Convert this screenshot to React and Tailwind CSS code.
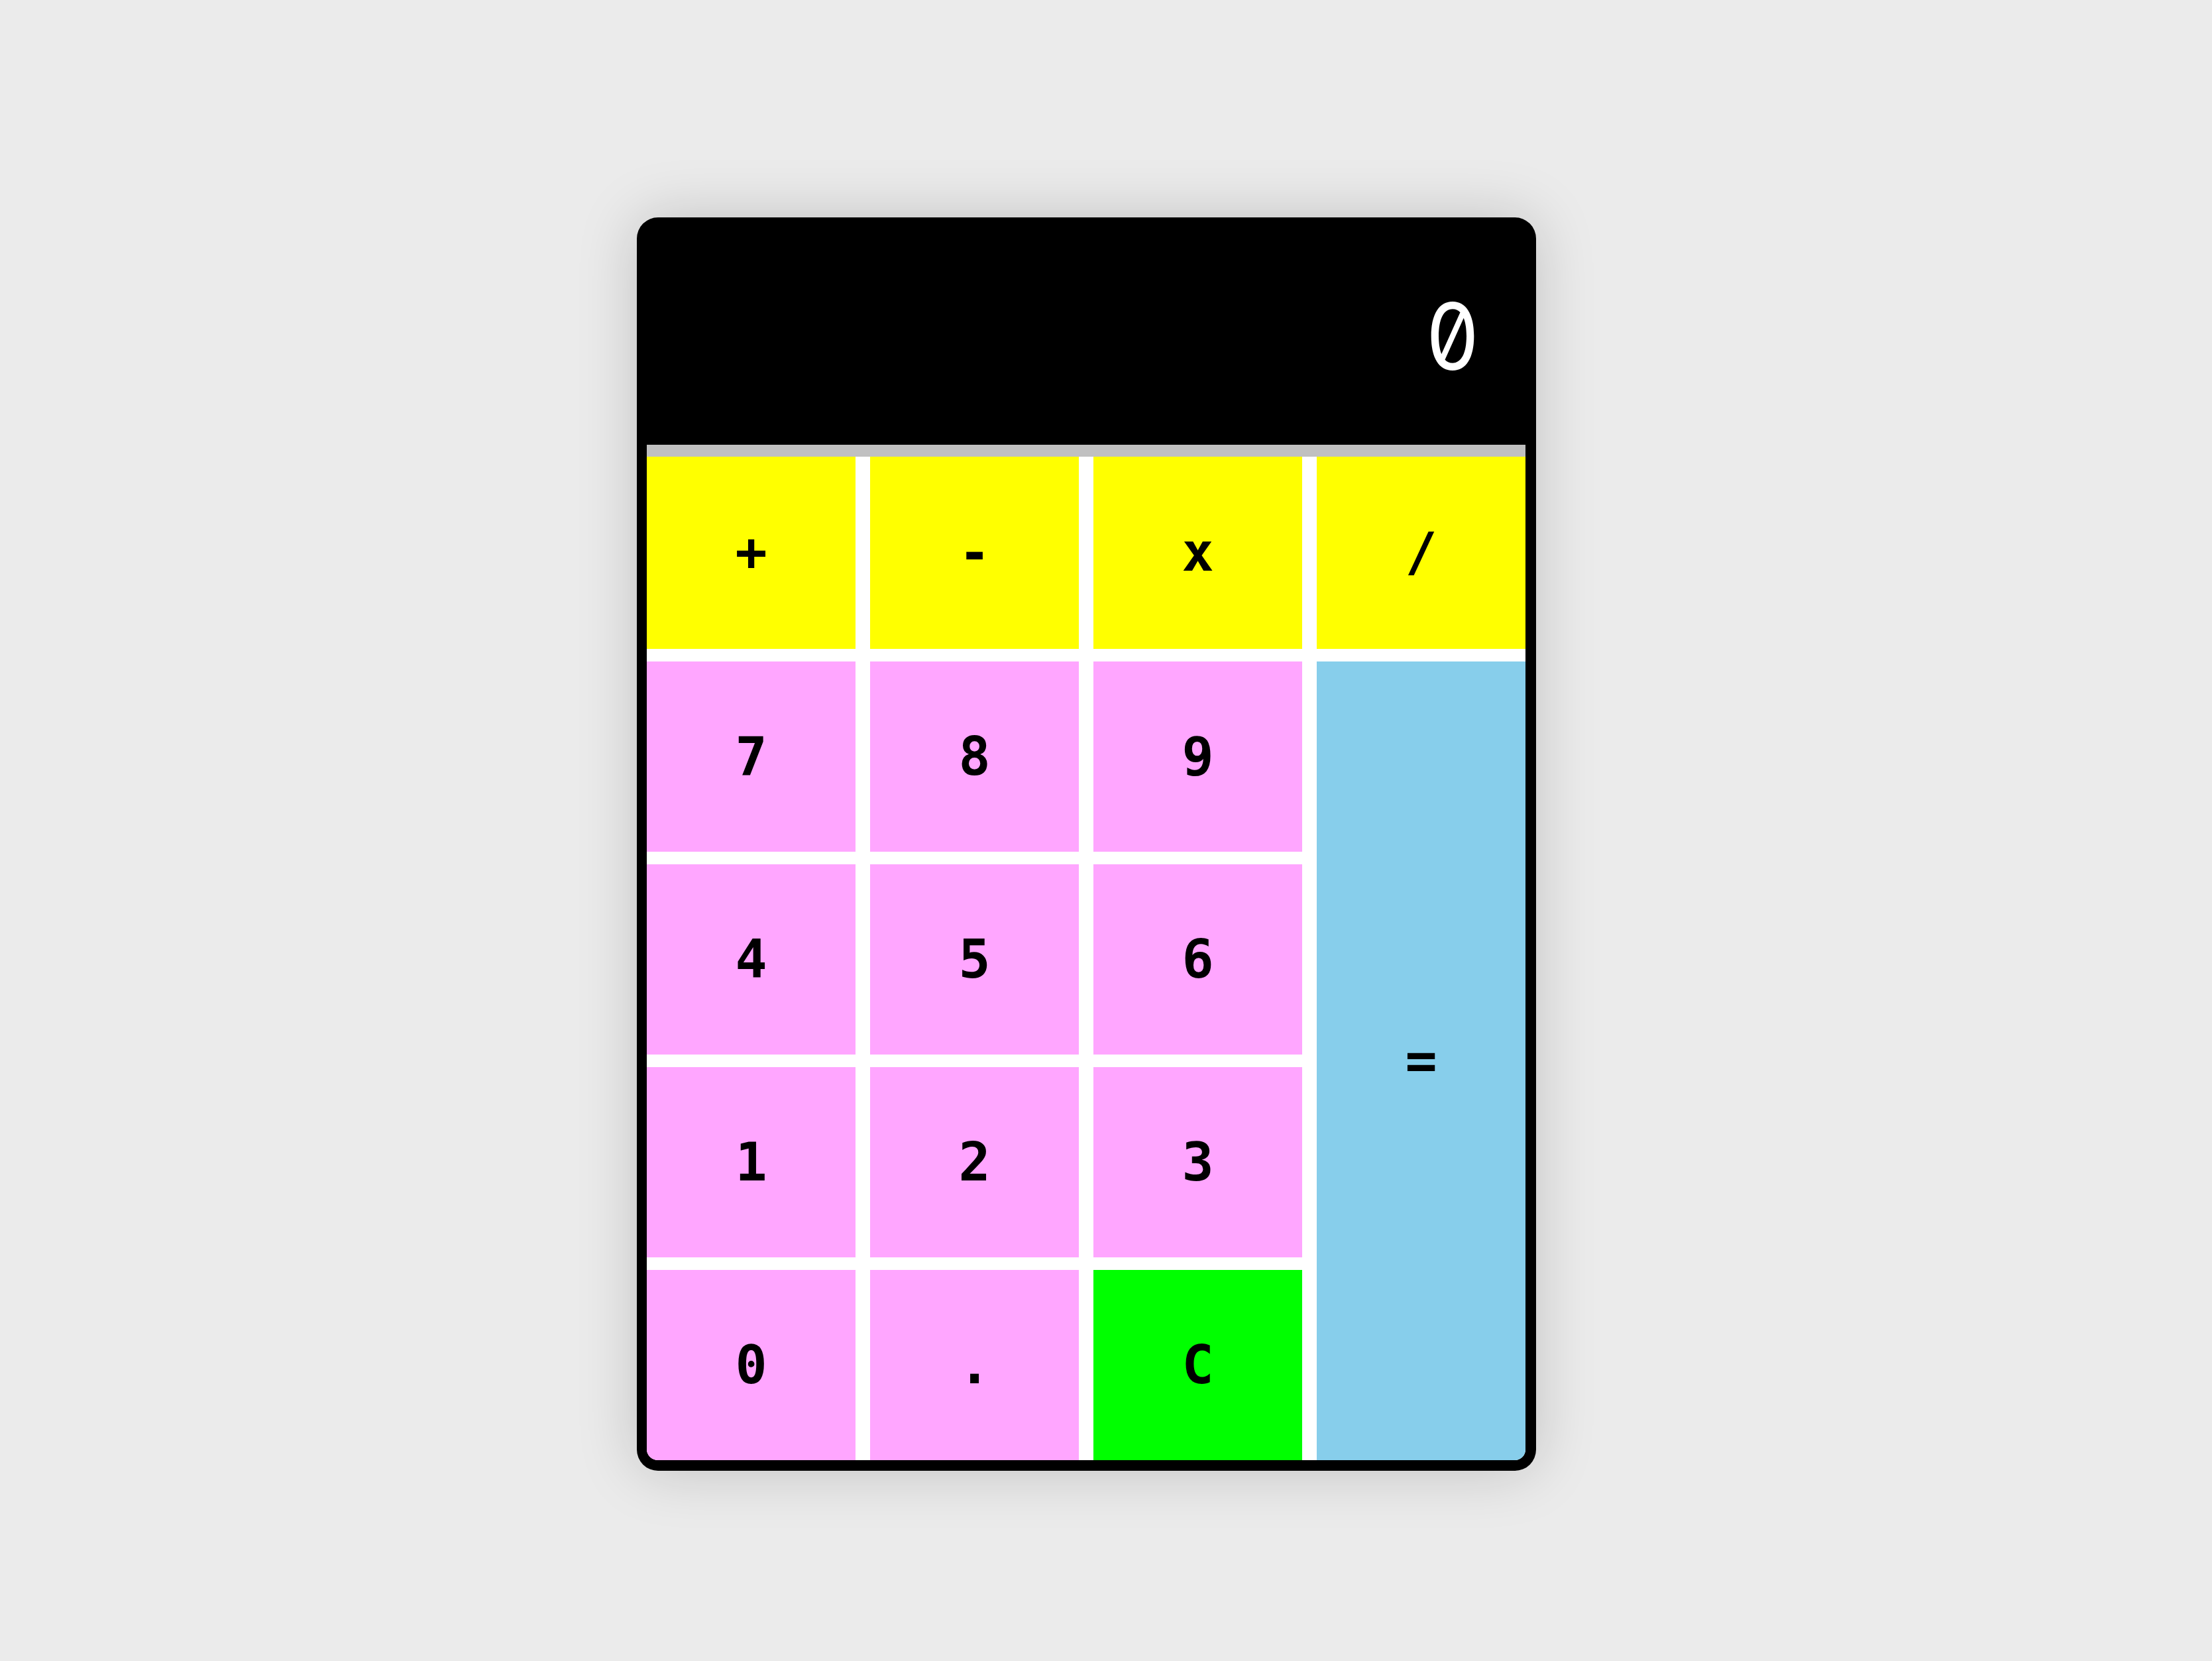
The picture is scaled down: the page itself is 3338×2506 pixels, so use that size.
import React, { useState } from 'react';

const keys = [
  { label: '+', color: 'bg-[#ffff00]', type: 'op' },
  { label: '-', color: 'bg-[#ffff00]', type: 'op' },
  { label: 'x', color: 'bg-[#ffff00]', type: 'op' },
  { label: '/', color: 'bg-[#ffff00]', type: 'op' },
  { label: '7', color: 'bg-[#ffa6ff]' },
  { label: '8', color: 'bg-[#ffa6ff]' },
  { label: '9', color: 'bg-[#ffa6ff]' },
  { label: '=', color: 'bg-[#87ceeb] row-span-4', type: 'eq' },
  { label: '4', color: 'bg-[#ffa6ff]' },
  { label: '5', color: 'bg-[#ffa6ff]' },
  { label: '6', color: 'bg-[#ffa6ff]' },
  { label: '1', color: 'bg-[#ffa6ff]' },
  { label: '2', color: 'bg-[#ffa6ff]' },
  { label: '3', color: 'bg-[#ffa6ff]' },
  { label: '0', color: 'bg-[#ffa6ff]' },
  { label: '.', color: 'bg-[#ffa6ff]' },
  { label: 'C', color: 'bg-[#00ff00]', type: 'clear' },
];

const App = () => {
  const [display, setDisplay] = useState('0');

  const handleKey = (key) => {
    if (key.type === 'clear') {
      setDisplay('0');
      return;
    }
    if (key.type === 'eq') {
      try {
        // eslint-disable-next-line no-new-func
        const result = Function(`return (${display.replace(/x/g, '*')})`)();
        setDisplay(String(result));
      } catch (e) {
        setDisplay('Error');
      }
      return;
    }
    setDisplay((prev) => (prev === '0' && key.type !== 'op' && key.label !== '.' ? key.label : prev + key.label));
  };

  return (
    <div className="min-h-[2506px] w-full bg-[#ebebeb] pl-[961px] pt-[328px]">
      <div className="w-[1357px] rounded-[32px] border-[15px] border-r-[16px] border-b-[16px] border-black bg-black overflow-hidden shadow-[0_0_90px_rgba(0,0,0,0.18)]">
        <div className="h-[328px] flex items-center justify-end pr-[78px] text-white text-[140px] leading-none font-['Inter',sans-serif] [font-feature-settings:'zero'] scale-x-90 origin-right">
          {display}
        </div>
        <div className="h-[18px] bg-[#c0c0c0]" />
        <div className="grid grid-cols-[repeat(4,315px)] grid-rows-[290px_repeat(4,287px)] gap-x-[22px] gap-y-[19px] bg-white rounded-b-[12px]">
          {keys.map((key) => (
            <button
              key={key.label}
              onClick={() => handleKey(key)}
              className={`${key.color} flex items-center justify-center text-black text-[80px] font-bold leading-none font-['DejaVu_Sans_Mono',monospace]`}
            >
              {key.label}
            </button>
          ))}
        </div>
      </div>
    </div>
  );
};

export default App;
